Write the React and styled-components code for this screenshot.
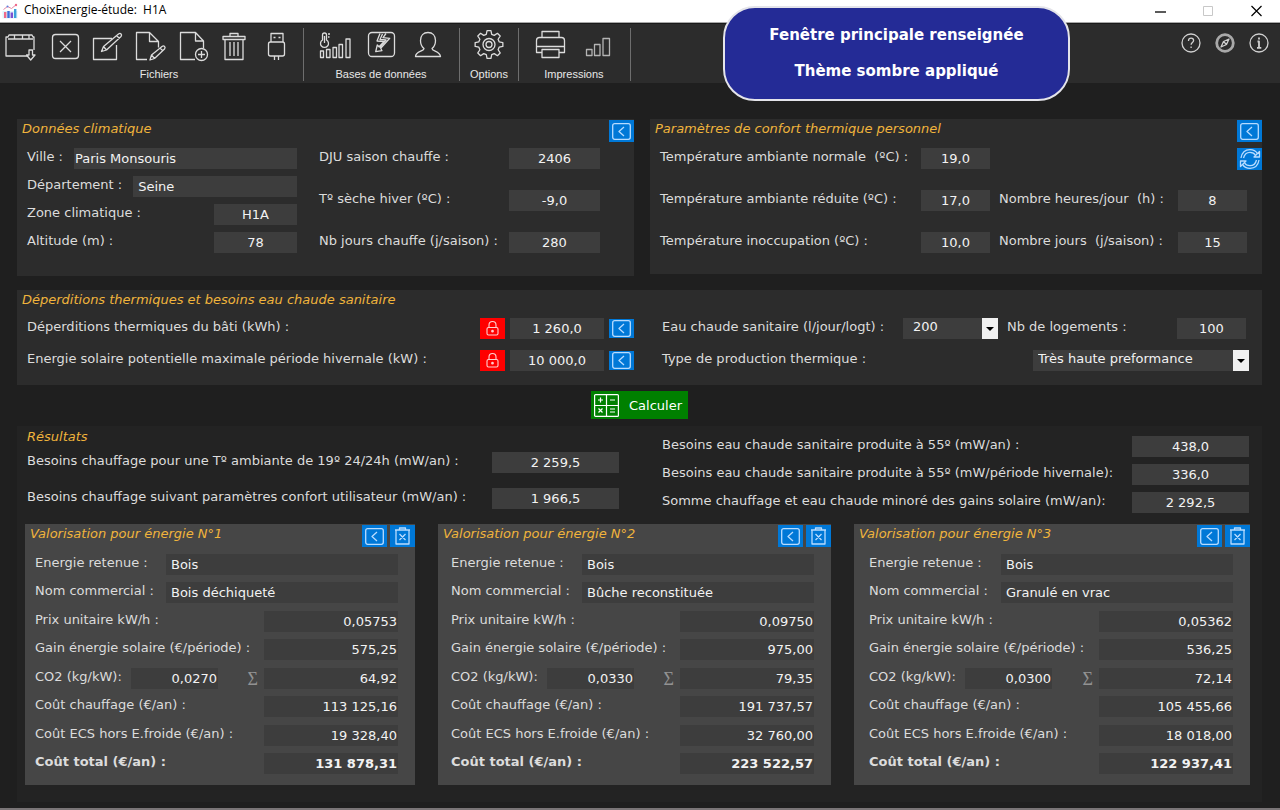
import React, { useId, useState } from 'react';
import styled, { createGlobalStyle } from 'styled-components';

const GlobalStyle = createGlobalStyle`
  * {
    box-sizing: border-box;
  }
  body {
    margin: 0;
    background: #1f1f1f;
    color: #dcdcdc;
    font-family: 'DejaVu Sans', Verdana, sans-serif;
    font-size: 13px;
  }
  button,
  input,
  select {
    font: inherit;
    color: inherit;
    border: none;
    border-radius: 0;
    margin: 0;
    padding: 0;
  }
  h2 {
    margin: 0;
  }
`;

const Window = styled.div`
  position: relative;
  min-height: 100vh;
  display: flex;
  flex-direction: column;
  background: #1f1f1f;
  border-bottom: 2px solid #7a7577;
`;

/* title bar */
const TitleBar = styled.header`
  display: flex;
  align-items: center;
  height: 23px;
  padding-left: 2px;
  background: #fff;
  color: #000;
  border-bottom: 1px solid #a8a8a8;
`;
const WindowTitle = styled.span`
  flex: 1;
  padding: 0 0 2px 6px;
  font-family: 'Open Sans', 'Noto Sans', sans-serif;
  font-size: 12px;
  line-height: 16px;
  white-space: pre;
`;
const WindowButton = styled.button`
  display: flex;
  align-items: center;
  justify-content: center;
  width: 48px;
  height: 22px;
  background: none;
  color: ${(p) => (p.disabled ? '#c8c8c8' : '#000')};
`;

/* toolbar */
const Toolbar = styled.nav`
  display: flex;
  height: 60px;
  padding-top: 4px;
  background: #2c2c2c;
  border-top: 1px solid #1a1a1a;
`;
const ToolGroup = styled.div`
  display: flex;
  flex-direction: column;
  height: 53px;
  padding: 2px ${(p) => p.$right}px 0 ${(p) => p.$left}px;
  border-right: 1px solid #6e6e6e;
`;
const ToolIcons = styled.div`
  display: flex;
  justify-content: center;
  gap: ${(p) => p.$gap}px;
`;
const ToolButton = styled.button`
  width: 32px;
  height: 32px;
  background: none;
  color: #dcdcdc;
  cursor: pointer;
`;
const ToolLabel = styled.span`
  padding-left: ${(p) => p.$indent || 0}px;
  color: #e8e8e8;
  font-family: 'Liberation Sans', Arial, sans-serif;
  font-size: 11px;
  line-height: 24px;
  text-align: center;
  white-space: nowrap;
`;
const HelpLinks = styled.div`
  display: flex;
  gap: 14px;
  margin-left: auto;
  padding: 5px 11px 0 0;
`;
const HelpButton = styled.button`
  width: 20px;
  height: 20px;
  background: none;
  color: #d0d0d0;
  cursor: pointer;
`;
const Svg = styled.svg`
  display: block;
  overflow: visible;
  fill: none;
  stroke: currentColor;
  stroke-width: ${(p) => p.$stroke || 1.3};
  stroke-linejoin: round;
`;

const Callout = styled.aside`
  position: absolute;
  top: 6px;
  left: 723px;
  width: 347px;
  height: 95px;
  padding-top: 9px;
  border: 2px solid #e4e4ea;
  border-radius: 32px;
  background: #242b96;
  color: #fff;
  font-size: 15px;
  font-weight: bold;
  line-height: 36px;
  text-align: center;
`;

/* panels */
const Main = styled.main`
  flex: 1;
  padding: 36px 18px 5px 17px;
`;
const TopPanels = styled.div`
  display: grid;
  grid-template-columns: 617fr 612fr;
  align-items: start;
  gap: 16px;
`;
const Panel = styled.section`
  padding-bottom: ${(p) => p.$bottom}px;
  background: #2c2c2c;
`;
const PanelHeader = styled.div`
  display: flex;
  align-items: flex-start;
  gap: 3px;
  height: ${(p) => p.$height || 29}px;
  padding: 1px 0 0 5px;
`;
const PanelTitle = styled.h2`
  flex: 1;
  color: #f0b43c;
  font-size: 13px;
  font-style: italic;
  font-weight: normal;
  line-height: 18px;
`;
const SquareButton = styled.button`
  display: flex;
  flex: none;
  align-items: center;
  justify-content: center;
  width: 25px;
  height: ${(p) => p.$height || 22}px;
  background: ${(p) => p.$color || '#0078d7'};
  color: ${(p) => (p.$color ? '#ffd0d0' : '#b8dcff')};
  cursor: pointer;
`;
const Columns = styled.div`
  display: grid;
  grid-template-columns: ${(p) => p.$columns};
  gap: ${(p) => p.$gap}px;
  padding: 0 ${(p) => p.$right}px 0 10px;
`;
const Stack = styled.div`
  display: flex;
  flex-direction: column;
  gap: ${(p) => p.$gap}px;
  padding-top: ${(p) => p.$top || 0}px;
`;
const Row = styled.div`
  display: flex;
  justify-content: space-between;
  height: 21px;
`;
const Label = styled.label`
  color: #dcdcdc;
  font-weight: ${(p) => (p.$bold ? 'bold' : 'normal')};
  line-height: 18px;
  white-space: pre;
`;
const Input = styled.input`
  width: ${(p) => (p.$width ? `${p.$width}px` : '100%')};
  min-width: 0;
  height: 21px;
  padding: ${(p) => p.$pad || '0 1px'};
  background: #3d3d3d;
  color: #f2f2f2;
  font-weight: ${(p) => (p.$bold ? 'bold' : 'normal')};
  text-align: ${(p) => p.$align || 'center'};
`;
const WideRow = styled(Row)`
  gap: 11px;
`;
const ComfortGrid = styled.div`
  display: grid;
  grid-template-columns: 261fr 69fr 9fr 179fr 69fr 15fr;
  row-gap: 21px;
  padding-left: 10px;
`;
const RefreshCell = styled.div`
  grid-column: 5 / 7;
  height: 21px;
  justify-self: end;
`;
const ComfortLabel = styled(Label)`
  grid-column: ${(p) => p.$column};
`;
const LockedFields = styled.div`
  display: flex;
  align-items: center;
  gap: 5px;
`;
const SelectBox = styled.div`
  position: relative;
  width: ${(p) => p.$width}px;
  height: 21px;
`;
const Select = styled.select`
  appearance: none;
  width: 100%;
  height: 21px;
  padding: 0 18px 4px ${(p) => p.$pad}px;
  background: #3d3d3d;
  color: #f2f2f2;
`;
const SelectArrow = styled.span`
  position: absolute;
  top: 0;
  right: 0;
  display: flex;
  align-items: center;
  justify-content: center;
  width: 16px;
  height: 21px;
  background: #f0f0f0;
  color: #000;
  pointer-events: none;
`;
const HousingRow = styled.div`
  display: grid;
  grid-template-columns: 241fr 95px 9fr 170fr 69px 3px;
  height: 21px;
`;
const CalculateBar = styled.div`
  display: flex;
  justify-content: center;
  padding: 6px 0 7px;
`;
const CalculateButton = styled.button`
  display: flex;
  align-items: center;
  gap: 10px;
  height: 28px;
  padding: 0 6px 0 3px;
  background: #008000;
  color: #fff;
  cursor: pointer;
`;

/* results */
const Results = styled.section`
  padding-bottom: 17px;
  background: #232323;
`;
const ResultsTitle = styled(PanelTitle)`
  flex: none;
  height: 24px;
  padding-top: 2px;
`;
const Cards = styled.div`
  display: grid;
  grid-template-columns: 390fr 393fr 396fr;
  gap: 23px;
  padding: 11px 12px 0 8px;
`;
const Card = styled.section`
  display: flex;
  flex-direction: column;
  min-height: 261px;
  background: #464646;
`;
const CardRows = styled.div`
  flex: 1;
  display: flex;
  flex-direction: column;
  justify-content: space-between;
  padding: 0 17px 11px ${(p) => p.$inset}px;
`;
const EmissionLabel = styled(Label)`
  width: 96px;
`;
const Sigma = styled.span`
  margin-left: auto;
  padding-right: 6px;
  color: #929292;
  font-family: 'Liberation Serif', serif;
  font-size: 18px;
  line-height: 23px;
`;

const gearPath = () => {
  const points = [];
  for (let i = 0; i < 8; i += 1) {
    [[-15, 10.5], [-8, 14], [8, 14], [15, 10.5]].forEach(([deg, r]) => {
      const a = ((i * 45 + deg) * Math.PI) / 180;
      points.push(`${(16 + r * Math.cos(a)).toFixed(2)} ${(14.5 + r * Math.sin(a)).toFixed(2)}`);
    });
  }
  return `M${points.join('L')}Z`;
};

const toolIcons = {
  folder: (
    <>
      <path d="M24 26H2V7h2l1-2h23l1 2h1v13" />
      <path d="M4 9h25M10.500 5v4M18.500 5v4M25 5v4" />
      <path d="M25 20h3.500v5H31l-4.300 5-4.200-5H25Z" />
    </>
  ),
  close: (
    <>
      <rect x="5.500" y="4.500" width="26" height="24" rx="3" />
      <path d="m13 11 11 11M24 11 13 22" />
    </>
  ),
  edit: (
    <>
      <path d="M22 8.500H3.500v21h23V15" />
      <path d="m11.500 21.500 2-5L28.500 4c2-1.500 4 .5 2.500 2.500L16.500 20Zm2-5 3 3.500M26.500 5.500l3 3" />
    </>
  ),
  pageEdit: (
    <>
      <path d="M14 29.500H3.500v-27h13l9 9v6M16.500 2.500v9h9" />
      <path d="m17 30 1.500-5L29 16.500c2-1.500 4 .5 2.500 2.500L21.500 28.500Zm1.500-5 3 3.500M27 18l3 3" />
    </>
  ),
  pageAdd: (
    <>
      <path d="M19 29.500H4.500v-27h15l8 8.500v7M19.500 2.500V11h8" />
      <circle cx="25.500" cy="24.500" r="6" />
      <path d="M25.500 21v7M22 24.500h7" />
    </>
  ),
  trash: (
    <path d="M4 6.500h22v3H4ZM11 6.500v-3h8v3M6 9.500v20h18v-20M11 12v14M15 12v14M19 12v14" />
  ),
  usb: (
    <>
      <path d="M9 12V3.500h12V12M11.500 7.500h2M16.500 7.500h2" />
      <rect x="6.500" y="12" width="16" height="14" rx="2" />
      <path d="M12.500 26v4M16.500 26v4" />
    </>
  ),
  climate: (
    <>
      <path d="M3.500 10V5a2 2 0 0 1 4 0v5a4 4 0 1 1-4 0ZM5.500 6v7M9 4h2M9 7h1.500" />
      <path d="M1.500 21h3v6.500h-3ZM7.500 19.500h3.500v8H7.500ZM14 17.500h3.500v10H14ZM20 14.500h3.500v13H20ZM27 9h4v18.500h-4Z" />
    </>
  ),
  energy: (
    <>
      <rect x="3.500" y="2.500" width="26" height="24" rx="3.500" />
      <path d="m15 3.500-3 7.500 7 .7-5 5L12.300 15l-1.600 6.700 6.300-1-1.300-2.400 9-10-6.700-.6L21 3.500M17.500 4l-2.500 5.500 6 .5-6.500 7.500" />
    </>
  ),
  person: (
    <path d="M13 18.500c-2-1.500-3.500-4.500-3.500-8 0-5 3-8 7.500-8s7.500 3 7.500 8c0 3.500-1.500 6.500-3.500 8 0 3 8 2.500 8.500 8h-25C4.500 21 13 21.500 13 18.500Z" />
  ),
  gear: (
    <>
      <path d={gearPath()} />
      <circle cx="16" cy="14.500" r="6" />
      <circle cx="16" cy="14.500" r="3" />
    </>
  ),
  printer: (
    <>
      <path d="M7 7.500v-6h17v6M7 22.500H1.500v-12c0-2 1-3 3-3h22c2 0 3 1 3 3v12H24M1.500 16.500h28" />
      <path d="M7 19.500h17v8H7Z" />
    </>
  ),
  chart: (
    <path
      d="M5.500 19.500h5.500v6H5.500ZM13.500 14.500H19v11h-5.500ZM22 8.500h6.500v17H22Z"
      stroke="#b4b4b4"
    />
  ),
};

const toolGroups = [
  {
    label: 'Fichiers',
    left: 4,
    right: 9,
    gap: 11,
    indent: 20,
    tools: [
      ['folder', 'Ouvrir'],
      ['close', 'Fermer'],
      ['edit', 'Modifier'],
      ['pageEdit', 'Renommer'],
      ['pageAdd', 'Nouveau'],
      ['trash', 'Supprimer'],
      ['usb', 'Clé USB'],
    ],
  },
  {
    label: 'Bases de données',
    left: 15,
    right: 16,
    gap: 14,
    tools: [
      ['climate', 'Climat'],
      ['energy', 'Energies'],
      ['person', 'Clients'],
    ],
  },
  { label: 'Options', left: 10, right: 10, gap: 0, tools: [['gear', 'Options']] },
  {
    label: 'Impressions',
    left: 16,
    right: 17,
    gap: 14,
    tools: [
      ['printer', 'Imprimer'],
      ['chart', 'Graphiques'],
    ],
  },
];

const cards = [
  {
    number: 1,
    inset: 10,
    energy: 'Bois',
    name: 'Bois déchiqueté',
    price: '0,05753',
    gain: '575,25',
    co2: '0,0270',
    co2Total: '64,92',
    heating: '113 125,16',
    water: '19 328,40',
    total: '131 878,31',
  },
  {
    number: 2,
    inset: 13,
    energy: 'Bois',
    name: 'Bûche reconstituée',
    price: '0,09750',
    gain: '975,00',
    co2: '0,0330',
    co2Total: '79,35',
    heating: '191 737,57',
    water: '32 760,00',
    total: '223 522,57',
  },
  {
    number: 3,
    inset: 15,
    energy: 'Bois',
    name: 'Granulé en vrac',
    price: '0,05362',
    gain: '536,25',
    co2: '0,0300',
    co2Total: '72,14',
    heating: '105 455,66',
    water: '18 018,00',
    total: '122 937,41',
  },
];

const BackIcon = () => (
  <Svg width="19" height="17" viewBox="0 0 19 17">
    <rect x="0.700" y="0.700" width="17.600" height="15.600" rx="2" />
    <path d="M12 4 7 8.500l5 4.500" />
  </Svg>
);

const ClearIcon = () => (
  <Svg width="15" height="18" viewBox="0 0 15 18">
    <path d="M0 3h15M4.500 3V1h6v2M1 3v14h13V3M4.500 7l6 6M10.500 7l-6 6" />
  </Svg>
);

const RefreshIcon = () => (
  <Svg width="22" height="20" viewBox="0 0 22 20">
    <path d="M2 9C3 3 7 .7 11 .7c3.500 0 6 1.500 7.500 4M4.500 9C5.500 5 8 3.300 11 3.300c2.500 0 4.500 1.200 5.500 3M20 11c-1 6-5 8.300-9 8.300-3.500 0-6-1.500-7.500-4M17.500 11c-1 4-3.500 5.700-6.500 5.700-2.500 0-4.500-1.200-5.500-3" />
    <path d="M20.500 2.500V8H15ZM1.500 17.500V12H7Z" />
  </Svg>
);

const LockIcon = () => (
  <Svg width="13" height="15" viewBox="0 0 13 15" $stroke={1.1}>
    <rect x="1" y="6.500" width="11" height="7.500" rx="1.500" />
    <path d="M3 6.500V4a3.500 3.500 0 0 1 7 0v2.500" />
    <circle cx="6.500" cy="10.200" r="0.800" fill="currentColor" />
  </Svg>
);

const CalculatorIcon = () => (
  <Svg width="25" height="23" viewBox="0 0 25 23" $stroke={1.2}>
    <rect x="0.600" y="0.600" width="23.800" height="21.800" rx="1" />
    <path d="M12.500.6v21.800M.6 11.500h23.800M4 6h5M6.500 3.500v5M16 6h5M4.500 14.500l4 4M8.500 14.500l-4 4M16 15h5M16 18h5" />
  </Svg>
);

const AppIcon = () => (
  <svg width="16" height="16" viewBox="0 0 16 16">
    <path d="M.5 15.500h15V8h-15Z" fill="#dff3fb" />
    <path d="M2 9h2.400v6H2Z" fill="#ef6a8b" />
    <path d="M5.300 8h2.400v7H5.300Z" fill="#3f6fd8" />
    <path d="M8.600 9.500H11V15H8.600Z" fill="#7b4fd0" />
    <path d="M12 6h2.400v9H12Z" fill="#3aa0dd" />
    <path d="m1.500 6.500 4-3 4 2 5-4" fill="none" stroke="#e58aa8" strokeWidth="1" />
    <circle cx="5.500" cy="3.500" r="1" fill="#5b7fe0" />
    <circle cx="14" cy="2" r="1.200" fill="#ef6a8b" />
  </svg>
);

const Field = ({ label, value, row: FieldRow = Row, ...rest }) => {
  const id = useId();
  const [text, setText] = useState(value);
  return (
    <FieldRow>
      <Label htmlFor={id} $bold={rest.$bold}>
        {label}
      </Label>
      <Input id={id} value={text} onChange={(e) => setText(e.target.value)} {...rest} />
    </FieldRow>
  );
};

const LockedField = ({ label, value }) => {
  const id = useId();
  return (
    <Row>
      <Label htmlFor={id}>{label}</Label>
      <LockedFields>
        <SquareButton $color="#ff0000" $height={21} aria-label="Verrouiller">
          <LockIcon />
        </SquareButton>
        <Input id={id} defaultValue={value} $width={94} />
        <SquareButton $height={19} aria-label="Choisir">
          <BackIcon />
        </SquareButton>
      </LockedFields>
    </Row>
  );
};

const DropDown = ({ id, options, width, pad }) => (
  <SelectBox $width={width}>
    <Select id={id} $pad={pad}>
      {options.map((o) => (
        <option key={o}>{o}</option>
      ))}
    </Select>
    <SelectArrow>
      <svg width="8" height="4" viewBox="0 0 8 4">
        <path d="M0 0h8L4 4Z" fill="currentColor" />
      </svg>
    </SelectArrow>
  </SelectBox>
);

const EnergyCard = ({ card }) => (
  <Card>
    <PanelHeader $height={30}>
      <PanelTitle>Valorisation pour énergie N°{card.number}</PanelTitle>
      <SquareButton aria-label="Choisir">
        <BackIcon />
      </SquareButton>
      <SquareButton aria-label="Effacer">
        <ClearIcon />
      </SquareButton>
    </PanelHeader>
    <CardRows $inset={card.inset}>
      <Field label="Energie retenue :" value={card.energy} $width={232} $align="left" $pad="0 5px" />
      <Field label="Nom commercial :" value={card.name} $width={232} $align="left" $pad="0 5px" />
      <Field label="Prix unitaire kW/h :" value={card.price} $width={134} $align="right" />
      <Field label="Gain énergie solaire (€/période) :" value={card.gain} $width={134} $align="right" />
      <Row>
        <EmissionLabel htmlFor={`co2-${card.number}`}>CO2 (kg/kW):</EmissionLabel>
        <Input id={`co2-${card.number}`} defaultValue={card.co2} $width={87} $align="right" />
        <Sigma>Σ</Sigma>
        <Input aria-label="Total CO2" defaultValue={card.co2Total} $width={134} $align="right" />
      </Row>
      <Field label="Coût chauffage (€/an) :" value={card.heating} $width={134} $align="right" />
      <Field label="Coût ECS hors E.froide (€/an) :" value={card.water} $width={134} $align="right" />
      <Field label="Coût total (€/an) :" value={card.total} $width={134} $align="right" $bold />
    </CardRows>
  </Card>
);

const App = () => {
  return (
    <Window>
      <GlobalStyle />
      <TitleBar>
        <AppIcon />
        <WindowTitle>{'ChoixEnergie-étude:  H1A'}</WindowTitle>
        <WindowButton aria-label="Réduire">
          <Svg width="11" height="11" viewBox="0 0 11 11">
            <path d="M0 6h11" />
          </Svg>
        </WindowButton>
        <WindowButton aria-label="Agrandir" disabled>
          <Svg width="11" height="11" viewBox="0 0 11 11" $stroke={1}>
            <path d="M.5.5h9v9h-9Z" />
          </Svg>
        </WindowButton>
        <WindowButton aria-label="Quitter">
          <Svg width="11" height="11" viewBox="0 0 11 11" $stroke={1.2}>
            <path d="m.5 0 10 10M10.500 0l-10 10" />
          </Svg>
        </WindowButton>
      </TitleBar>

      <Toolbar>
        {toolGroups.map((group) => (
          <ToolGroup key={group.label} $left={group.left} $right={group.right}>
            <ToolIcons $gap={group.gap}>
              {group.tools.map(([icon, name]) => (
                <ToolButton key={icon} aria-label={name}>
                  <Svg width="32" height="32" viewBox="0 0 32 32">
                    {toolIcons[icon]}
                  </Svg>
                </ToolButton>
              ))}
            </ToolIcons>
            <ToolLabel $indent={group.indent}>{group.label}</ToolLabel>
          </ToolGroup>
        ))}
        <HelpLinks>
          <HelpButton aria-label="Aide">
            <Svg width="20" height="20" viewBox="0 0 20 20">
              <circle cx="10" cy="10" r="9" />
              <path d="M7.500 8c0-1.800 1-2.800 2.600-2.800S12.600 6.200 12.600 7.600c0 2-2.500 2-2.500 4.200M10.100 13.500v1.500" />
            </Svg>
          </HelpButton>
          <HelpButton aria-label="Navigation">
            <Svg width="20" height="20" viewBox="0 0 20 20">
              <circle cx="10" cy="10" r="8.300" strokeWidth="2.800" stroke="#a8a8a8" />
              <path d="m14 6-2.500 5.500L6 14l2.500-5.500ZM8.500 8.500l3 3" />
            </Svg>
          </HelpButton>
          <HelpButton aria-label="A propos">
            <Svg width="20" height="20" viewBox="0 0 20 20">
              <circle cx="10" cy="10" r="9" />
              <path d="M10 4.500v2M8.500 8.500H10v6M8 14.800h4.300" strokeWidth="1.800" />
            </Svg>
          </HelpButton>
        </HelpLinks>
      </Toolbar>

      <Callout>
        <div>Fenêtre principale renseignée</div>
        <div>Thème sombre appliqué</div>
      </Callout>

      <Main>
        <TopPanels>
          <Panel $bottom={23}>
            <PanelHeader>
              <PanelTitle>Données climatique</PanelTitle>
              <SquareButton aria-label="Choisir">
                <BackIcon />
              </SquareButton>
            </PanelHeader>
            <Columns $columns="270fr 281fr" $gap={22} $right={34}>
              <Stack $gap={7}>
                <Field label="Ville :" value="Paris Monsouris" row={WideRow} $align="left" />
                <Field label="Département :" value="Seine" row={WideRow} $align="left" $pad="0 5px" />
                <Field label="Zone climatique :" value="H1A" $width={83} />
                <Field label="Altitude (m) :" value="78" $width={83} />
              </Stack>
              <Stack $gap={21}>
                <Field label="DJU saison chauffe :" value="2406" $width={91} />
                <Field label="Tº sèche hiver (ºC) :" value="-9,0" $width={91} />
                <Field label="Nb jours chauffe (j/saison) :" value="280" $width={91} />
              </Stack>
            </Columns>
          </Panel>

          <Panel $bottom={21}>
            <PanelHeader>
              <PanelTitle>Paramètres de confort thermique personnel</PanelTitle>
              <SquareButton aria-label="Choisir">
                <BackIcon />
              </SquareButton>
            </PanelHeader>
            <ComfortGrid>
              <Label htmlFor="t-normal">{'Température ambiante normale  (ºC) :'}</Label>
              <Input id="t-normal" defaultValue="19,0" />
              <RefreshCell>
                <SquareButton aria-label="Actualiser">
                  <RefreshIcon />
                </SquareButton>
              </RefreshCell>
              <ComfortLabel $column={1} htmlFor="t-reduced">
                Température ambiante réduite (ºC) :
              </ComfortLabel>
              <Input id="t-reduced" defaultValue="17,0" />
              <ComfortLabel $column={4} htmlFor="hours">
                {'Nombre heures/jour  (h) :'}
              </ComfortLabel>
              <Input id="hours" defaultValue="8" />
              <ComfortLabel $column={1} htmlFor="t-empty">
                Température inoccupation (ºC) :
              </ComfortLabel>
              <Input id="t-empty" defaultValue="10,0" />
              <ComfortLabel $column={4} htmlFor="days">
                {'Nombre jours  (j/saison) :'}
              </ComfortLabel>
              <Input id="days" defaultValue="15" />
            </ComfortGrid>
          </Panel>
        </TopPanels>

        <Stack $gap={0} $top={14}>
          <Panel $bottom={14}>
            <PanelHeader $height={28}>
              <PanelTitle>Déperditions thermiques et besoins eau chaude sanitaire</PanelTitle>
            </PanelHeader>
            <Columns $columns="607fr 587fr" $gap={28} $right={13}>
              <Stack $gap={11}>
                <LockedField label="Déperditions thermiques du bâti (kWh) :" value="1 260,0" />
                <LockedField
                  label="Energie solaire potentielle maximale période hivernale (kW) :"
                  value="10 000,0"
                />
              </Stack>
              <Stack $gap={11}>
                <HousingRow>
                  <Label htmlFor="water">Eau chaude sanitaire (l/jour/logt) :</Label>
                  <DropDown id="water" options={['200', '150', '100']} width={95} pad={10} />
                  <span />
                  <Label htmlFor="homes">Nb de logements :</Label>
                  <Input id="homes" defaultValue="100" />
                </HousingRow>
                <Row>
                  <Label htmlFor="production">Type de production thermique :</Label>
                  <DropDown
                    id="production"
                    options={['Très haute preformance', 'Haute preformance']}
                    width={216}
                    pad={5}
                  />
                </Row>
              </Stack>
            </Columns>
          </Panel>
        </Stack>

        <CalculateBar>
          <CalculateButton>
            <CalculatorIcon />
            Calculer
          </CalculateButton>
        </CalculateBar>

        <Results>
          <Columns $columns="592fr 587fr" $gap={43} $right={13}>
            <Stack $gap={15}>
              <Stack $gap={2}>
                <ResultsTitle>Résultats</ResultsTitle>
                <Field
                  label="Besoins chauffage pour une Tº ambiante de 19º 24/24h (mW/an) :"
                  value="2 259,5"
                  $width={127}
                />
              </Stack>
              <Field
                label="Besoins chauffage suivant paramètres confort utilisateur (mW/an) :"
                value="1 966,5"
                $width={127}
              />
            </Stack>
            <Stack $gap={7} $top={10}>
              <Field label="Besoins eau chaude sanitaire produite à 55º (mW/an) :" value="438,0" $width={117} />
              <Field
                label="Besoins eau chaude sanitaire produite à 55º (mW/période hivernale):"
                value="336,0"
                $width={117}
              />
              <Field
                label="Somme chauffage et eau chaude minoré des gains solaire (mW/an):"
                value="2 292,5"
                $width={117}
              />
            </Stack>
          </Columns>
          <Cards>
            {cards.map((card) => (
              <EnergyCard key={card.number} card={card} />
            ))}
          </Cards>
        </Results>
      </Main>
    </Window>
  );
};

export default App;
